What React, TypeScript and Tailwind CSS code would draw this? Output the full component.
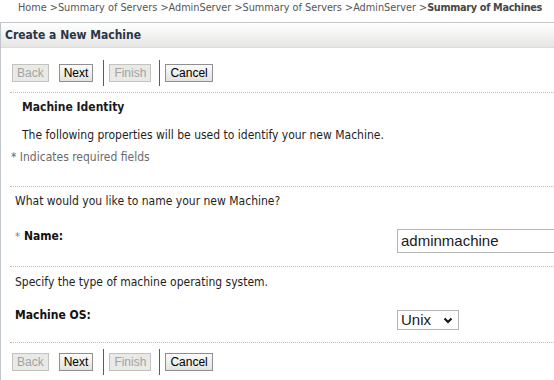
const TEXT = "font-['DejaVu_Sans_Condensed','DejaVu_Sans',sans-serif]"
const BTN = "font-['Liberation_Sans',Arial,sans-serif]"

function Button({ label, disabled }: { label: string; disabled?: boolean }) {
  return (
    <div
      className={
        disabled
          ? `${BTN} flex h-[18px] items-center border border-[#c2c2be] bg-[#e9e9e5] px-[4px] text-[12px] text-[#a3a3a3]`
          : `${BTN} flex h-[18px] items-center border border-[#8f8f8f] bg-linear-to-b from-[#fbfbf9] to-[#e2e2de] px-[4px] text-[12px] text-black`
      }
    >
      {label}
    </div>
  )
}

function Separator() {
  return <div className="h-[26px] w-px bg-[#5c5c5c]" />
}

function ButtonBar() {
  return (
    <div className="flex h-[26px] items-center pl-[11px]">
      <Button label="Back" disabled />
      <div className="w-[10px]" />
      <Button label="Next" />
      <div className="w-[10px]" />
      <Separator />
      <div className="w-[5px]" />
      <Button label="Finish" disabled />
      <div className="w-[8px]" />
      <Separator />
      <div className="w-[5px]" />
      <Button label="Cancel" />
    </div>
  )
}

function Dotted() {
  return <div className="ml-[9px] h-0 border-t border-dotted border-[#bcbcbc]" />
}

export default function App() {
  return (
    <div className={`${TEXT} h-[380px] w-[554px] overflow-hidden bg-white text-[12px] text-[#1e1e1e]`}>
      <div className="flex h-[22px] items-start pl-[18px] pt-px text-[10.8px] leading-[13px] text-[#555555]">
        <span className="whitespace-nowrap">
          Home &gt;Summary of Servers &gt;AdminServer &gt;Summary of Servers &gt;AdminServer &gt;
          <span className="font-bold tracking-[-0.03em] text-[#474747]">Summary of Machines</span>
        </span>
      </div>

      <div className="h-[358px] border-l border-t border-[#c0c5ca]">
        <div className="flex h-[25px] items-center border-b border-[#dcdcda] bg-linear-to-b from-white to-[#e5e6e3] pl-[4px]">
          <span className="text-[12px] font-bold text-[#2b3545]">Create a New Machine</span>
        </div>

        <div className="pt-[12px]">
          <ButtonBar />
        </div>

        <div className="mt-[6px]">
          <Dotted />
        </div>

        <div className="leading-[14px]">
          <div className="pl-[21px] pt-[7px] font-bold text-[#1a1a1a]">Machine Identity</div>
          <div className="pl-[21px] pt-[14px]">
            The following properties will be used to identify your new Machine.
          </div>
          <div className="pl-[10px] pt-[8px] text-[#6b6b6b]">* Indicates required fields</div>
        </div>

        <div className="mt-[22px]">
          <Dotted />
        </div>

        <div className="pl-[14px] pt-[7px] leading-[14px]">What would you like to name your new Machine?</div>

        <div className="mt-[21px] flex items-start pl-[14px]">
          <div className="flex w-[382px] shrink-0 items-baseline leading-[14px]">
            <span className="text-[11px] text-[#808080]">*</span>
            <span className="ml-[4px] font-bold text-[#111111]">Name:</span>
          </div>
          <div className="flex h-[24px] w-[200px] shrink-0 items-center border border-[#b4b4b4] pl-[3px]">
            <span className={`${BTN} text-[15px] text-[#1a1a1a]`}>adminmachine</span>
          </div>
        </div>

        <div className="mt-[13px]">
          <Dotted />
        </div>

        <div className="pl-[14px] pt-[8px] leading-[14px]">Specify the type of machine operating system.</div>

        <div className="mt-[19px] flex items-start pl-[14px]">
          <div className="w-[382px] shrink-0 font-bold leading-[14px] text-[#111111]">Machine OS:</div>
          <div className="mt-[2px] flex h-[20px] w-[62px] shrink-0 items-center justify-between border border-[#b4b4b4] pl-[3px] pr-[5px]">
            <span className={`${BTN} text-[15px] text-[#1a1a1a]`}>Unix</span>
            <svg width="10" height="7" viewBox="0 0 10 7" className="mt-px">
              <path d="M1.5 1.5 L5 5 L8.5 1.5" fill="none" stroke="#111111" strokeWidth="2" />
            </svg>
          </div>
        </div>

        <div className="mt-[12px]">
          <Dotted />
        </div>

        <div className="pt-[6px]">
          <ButtonBar />
        </div>
      </div>
    </div>
  )
}
